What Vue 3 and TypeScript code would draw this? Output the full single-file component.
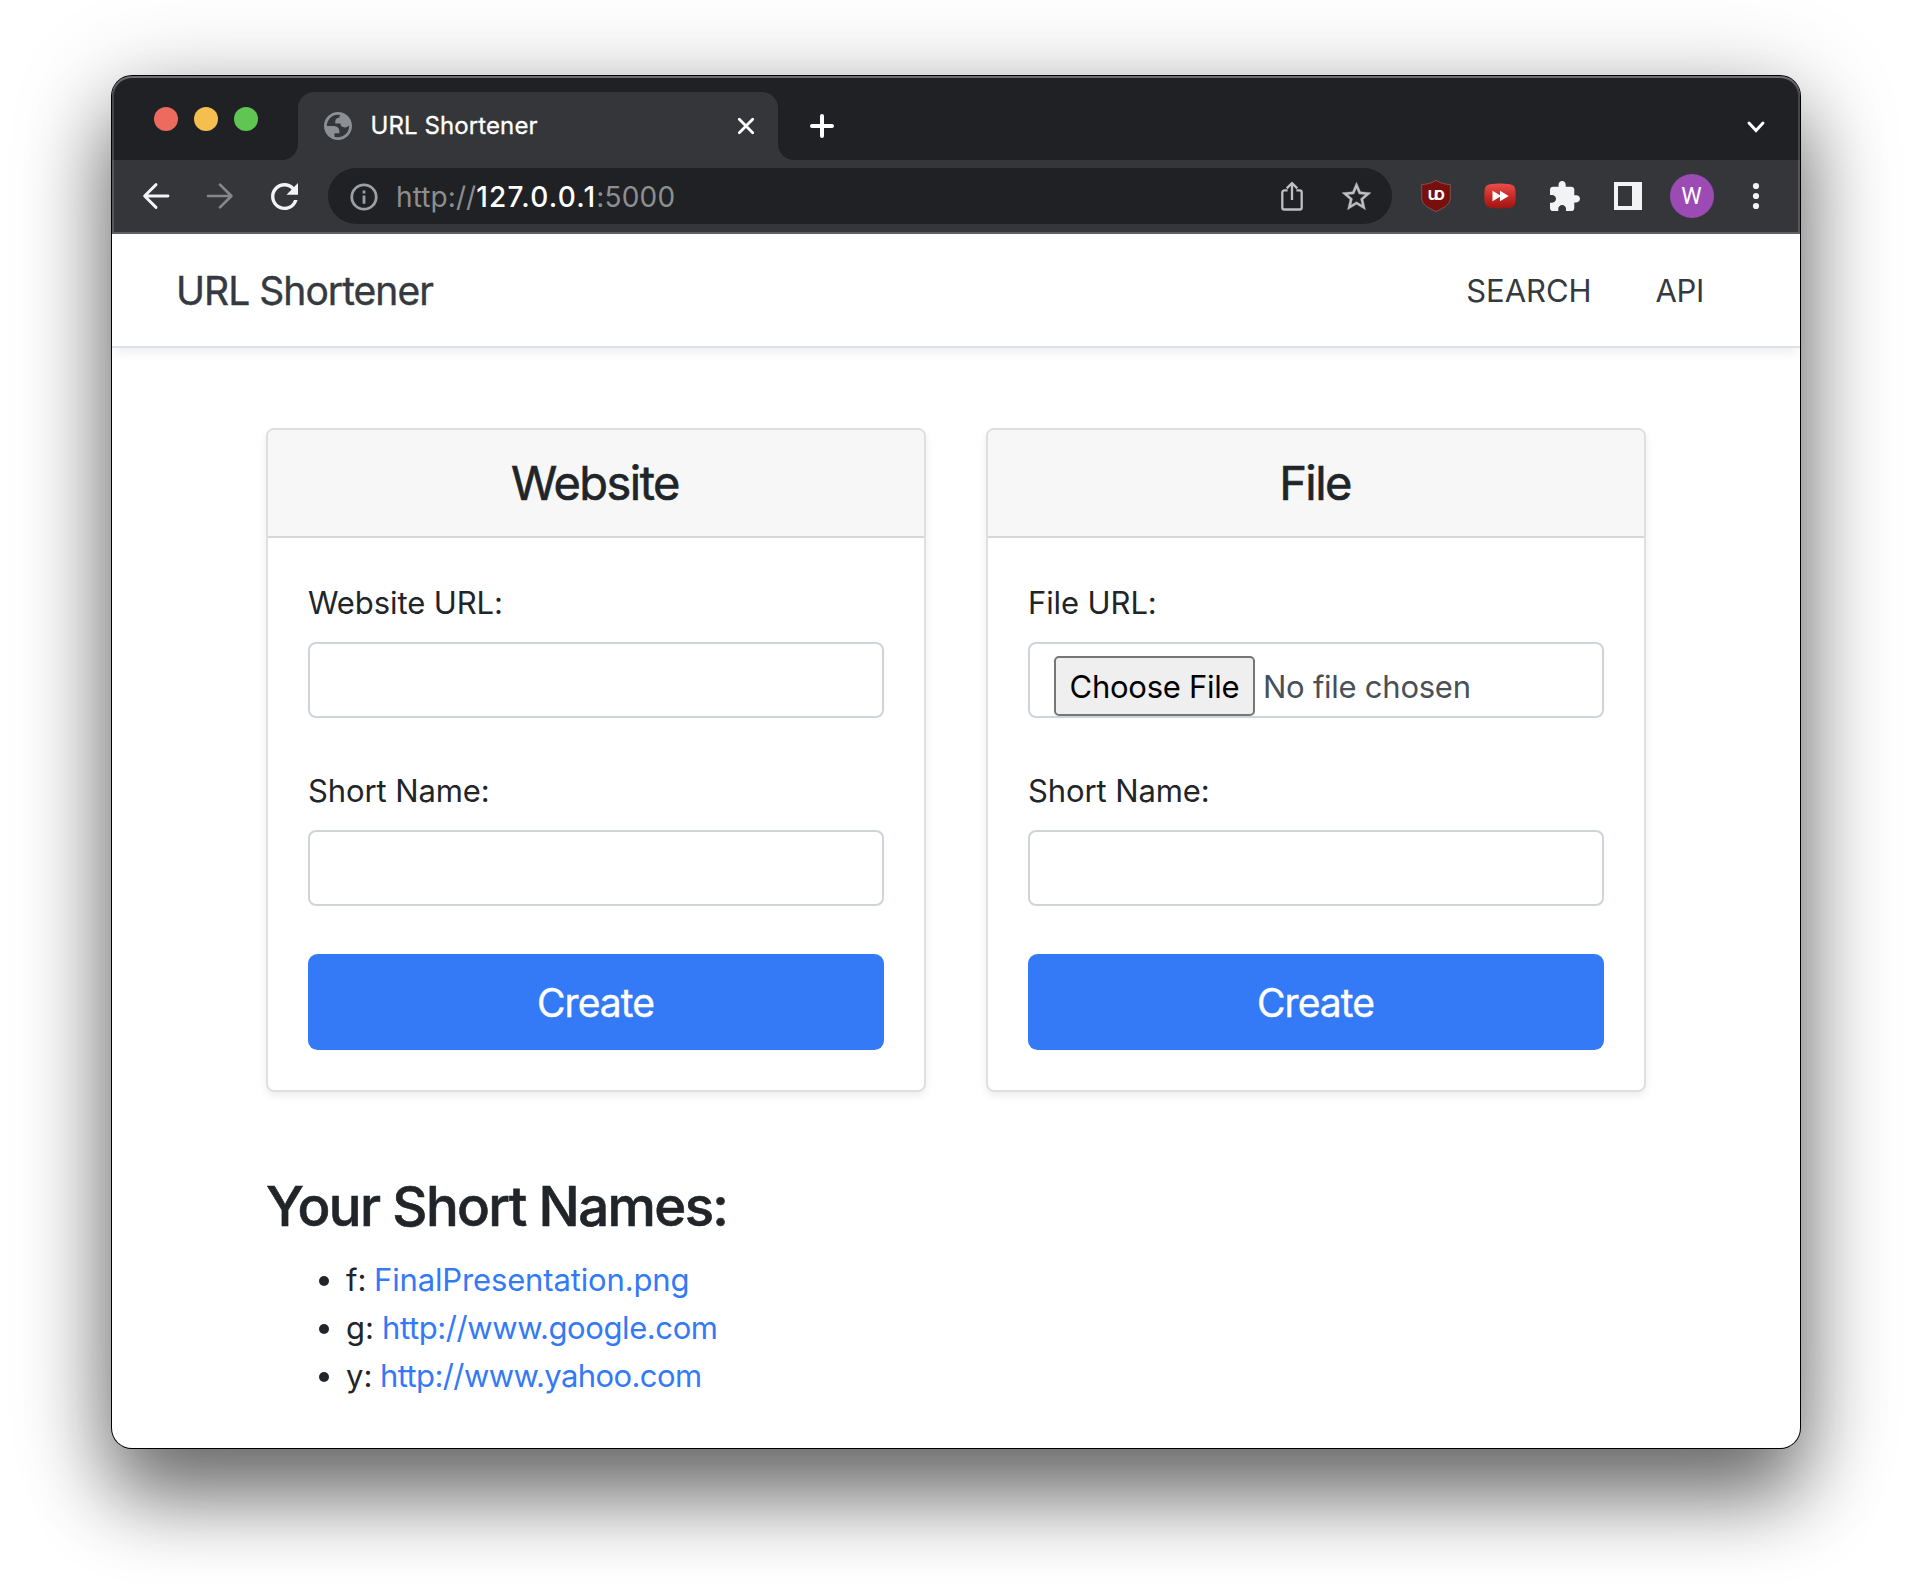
<script setup lang="ts">
interface Card {
  title: string
  label: string
  file: boolean
}
interface ShortName {
  key: string
  target: string
  kind: string
}

const cards: Card[] = [
  { title: 'Website', label: 'Website URL:', file: false },
  { title: 'File', label: 'File URL:', file: true },
]

const names: ShortName[] = [
  { key: 'f:', target: 'FinalPresentation.png', kind: 'png' },
  { key: 'g:', target: 'http://www.google.com', kind: 'google' },
  { key: 'y:', target: 'http://www.yahoo.com', kind: 'yahoo' },
]
</script>

<template>
  <div class="desktop">
    <div class="window">
      <div class="chrome">
        <div class="tabstrip">
          <div class="lights">
            <i class="light red"></i>
            <i class="light yellow"></i>
            <i class="light green"></i>
          </div>
          <div class="tab">
            <svg class="globe" width="28" height="28" viewBox="2 2 20 20">
              <path fill="#8a9095" d="M12 2c5.523 0 10 4.477 10 10s-4.477 10-10 10S2 17.523 2 12 6.477 2 12 2zM4 12h4.4c3.407.022 4.922 1.73 4.543 5.127H9.488v2.47a8.004 8.004 0 0 0 10.498-8.083C19.327 12.504 18.332 13 17 13c-2.137 0-3.206-.916-3.206-2.75h-3.748c-.274-2.728.683-4.092 2.87-4.092 0-.975.327-1.597.811-1.97A8.004 8.004 0 0 0 4 12z" />
            </svg>
            <span class="tab-title">URL Shortener</span>
            <svg width="18" height="18" viewBox="0 0 18 18" fill="none" stroke="#fff" stroke-width="2.8" stroke-linecap="round">
              <path d="M2.3 2.3l13.4 13.4M15.7 2.3L2.3 15.7" />
            </svg>
          </div>
          <svg class="plus" width="24" height="24" viewBox="0 0 24 24" fill="none" stroke="#fff" stroke-width="4" stroke-linecap="round">
            <path d="M12 2v20M2 12h20" />
          </svg>
          <svg class="chevron" width="18" height="12" viewBox="0 0 18 12" fill="none" stroke="#fff" stroke-width="2.9" stroke-linecap="round">
            <path d="M2 2l7 7.6L16 2" />
          </svg>
        </div>

        <div class="toolbar">
          <svg class="back" width="28" height="28" viewBox="0 0 28 28" fill="none" stroke="#f1f3f4" stroke-width="2.9" stroke-linecap="round" stroke-linejoin="round">
            <path d="M26 14H3M14 2.6L2.6 14 14 25.4" />
          </svg>
          <svg class="forward" width="28" height="28" viewBox="0 0 28 28" fill="none" stroke="#86878a" stroke-width="2.7" stroke-linecap="round" stroke-linejoin="round">
            <path d="M2 14h23M14 2.6L25.4 14 14 25.4" />
          </svg>
          <svg class="reload" width="27" height="27" viewBox="4 4 16 16" fill="#f1f3f4">
            <path d="M17.65 6.35A7.958 7.958 0 0012 4c-4.42 0-7.99 3.58-7.99 8s3.57 8 7.99 8c3.73 0 6.84-2.55 7.73-6h-2.08A5.99 5.99 0 0112 18c-3.31 0-6-2.69-6-6s2.69-6 6-6c1.66 0 3.14.69 4.22 1.78L13.2 11H20V4z" />
          </svg>
          <div class="omnibox">
            <svg class="info" width="28" height="28" viewBox="0 0 28 28" fill="none" stroke="#9aa0a6" stroke-width="2.8">
              <circle cx="14" cy="14" r="12.2" />
              <path d="M14 12.6v8.2M14 7.6v2.8" />
            </svg>
            <div class="url"><span class="scheme">http://</span><span class="host">127.0.0.1</span><span class="port">:5000</span></div>
            <svg class="share" width="22" height="30" viewBox="0 0 22 30" fill="none" stroke="#bdbfc2" stroke-width="2.3">
              <path d="M6.6 9.4H3.4a2.1 2.1 0 0 0-2.1 2.1v14.9a2.1 2.1 0 0 0 2.1 2.1h15.2a2.1 2.1 0 0 0 2.1-2.1V11.5a2.1 2.1 0 0 0-2.1-2.1h-3.2M11 19V2.2M5.7 7.4L11 2.1l5.3 5.3" />
            </svg>
            <svg class="star" width="29" height="28" viewBox="2 2 20 19" fill="#bdbfc2" stroke="#bdbfc2" stroke-width=".25">
              <path d="M22 9.24l-7.19-.62L12 2 9.19 8.63 2 9.24l5.46 4.73L5.82 21 12 17.27 18.18 21l-1.63-7.03L22 9.24zM12 15.4l-3.76 2.27 1-4.28-3.32-2.88 4.38-.38L12 6.1l1.71 4.04 4.38.38-3.32 2.88 1 4.28L12 15.4z" />
            </svg>
          </div>
          <div class="extensions">
            <svg width="32" height="34" viewBox="0 0 32 34">
              <path d="M16 1.3C12 4.2 7 5.3 1.7 5.5V19c0 6 5.5 9.5 14.3 13.5C24.8 28.5 30.3 25 30.3 19V5.5C25 5.3 20 4.2 16 1.3z" fill="#780f0c" stroke="#7e5a5b" stroke-width=".9" />
              <text x="7.5" y="20.500" font-family="Inter, sans-serif" font-weight="600" font-size="18" fill="#fff" textLength="17.500" lengthAdjust="spacing">uo</text>
            </svg>
            <svg width="32" height="26" viewBox="0 0 32 26">
              <defs>
                <linearGradient id="redbox" x1="0" y1="0" x2="0" y2="1">
                  <stop offset="0" stop-color="#ea4f4b" />
                  <stop offset=".5" stop-color="#c92b28" />
                  <stop offset="1" stop-color="#9c1512" />
                </linearGradient>
              </defs>
              <path d="M6 1.2Q16-.4 26 1.2 31 2 31.4 7q.5 6 0 12-.4 5-5.4 5.8-10 1.4-20 0Q1 24 .6 19q-.5-6 0-12Q1 2 6 1.2z" fill="url(#redbox)" />
              <path d="M8.5 7.7L16 12.3V7.7l8.7 5.3-8.7 5.3v-4.6l-7.5 4.6z" fill="#fff" />
            </svg>
            <svg width="30" height="30" viewBox="2 1 21 21" fill="#f1f3f4">
              <path d="M20.5 11H19V7c0-1.1-.9-2-2-2h-4V3.5C13 2.12 11.88 1 10.5 1S8 2.12 8 3.5V5H4c-1.1 0-1.99.9-1.99 2v3.8H3.5c1.49 0 2.7 1.21 2.7 2.7s-1.21 2.7-2.7 2.7H2V20c0 1.1.9 2 2 2h3.8v-1.5c0-1.49 1.21-2.7 2.7-2.7 1.49 0 2.7 1.21 2.7 2.7V22H17c1.1 0 2-.9 2-2v-4h1.5c1.38 0 2.5-1.12 2.5-2.5S21.88 11 20.5 11z" />
            </svg>
            <svg width="28" height="28" viewBox="0 0 28 28" fill="#f1f3f4" fill-rule="evenodd">
              <path d="M0 0h28v28H0zM4 4v20h14V4z" />
            </svg>
            <div class="avatar">W</div>
            <svg width="8" height="28" viewBox="0 0 8 28" fill="#f1f3f4">
              <circle cx="4" cy="4" r="3.1" /><circle cx="4" cy="14" r="3.1" /><circle cx="4" cy="24" r="3.1" />
            </svg>
          </div>
        </div>
      </div>

      <header class="navbar">
        <a class="brand">URL Shortener</a>
        <nav>
          <a class="search">SEARCH</a>
          <a class="api">API</a>
        </nav>
      </header>

      <main>
        <div class="cards">
          <section v-for="card in cards" :key="card.title" class="card">
            <h4>{{ card.title }}</h4>
            <div class="body">
              <label>{{ card.label }}</label>
              <div v-if="card.file" class="field">
                <span class="choose">Choose File</span>
                <span class="nofile">No file chosen</span>
              </div>
              <div v-else class="field"></div>
              <label>Short Name:</label>
              <div class="field"></div>
              <button type="button">Create</button>
            </div>
          </section>
        </div>

        <h3>Your Short Names:</h3>
        <ul>
          <li v-for="n in names" :key="n.key">
            <i class="bullet"></i>
            <span class="key" :class="n.kind">{{ n.key }}</span>
            <a :class="n.kind">{{ n.target }}</a>
          </li>
        </ul>
      </main>
    </div>
  </div>
</template>

<style>
body {
  background: #fff;
  overflow: hidden;
}
</style>

<style scoped>
* {
  box-sizing: border-box;
}
.desktop {
  width: 1912px;
  height: 1596px;
  padding: 76px 112px 0;
  overflow: hidden;
  font-family: Inter, "Liberation Sans", sans-serif;
  font-size: 31px;
  color: #212529;
}
svg {
  display: block;
  flex: none;
}
.window {
  width: 1688px;
  height: 1372px;
  border-radius: 20px;
  background: #fff;
  box-shadow:
    0 0 0 1px #000,
    0 50px 80px rgba(0, 0, 0, 0.48),
    0 16px 100px rgba(0, 0, 0, 0.28);
}
.chrome {
  position: relative;
  height: 158px;
  border-radius: 20px 20px 0 0;
  background: #35363a;
  border-bottom: 2px solid #5f6064;
  overflow: hidden;
}
.chrome::after {
  content: "";
  position: absolute;
  inset: 0 0 -40px;
  border-radius: 20px 20px 0 0;
  box-shadow: inset 0 0 0 2px rgba(255, 255, 255, 0.17), inset 0 2px 0 rgba(255, 255, 255, 0.22);
}
.tabstrip {
  display: flex;
  align-items: flex-end;
  height: 84px;
  background: #202124;
}
.lights {
  display: flex;
  gap: 16px;
  width: 186px;
  padding: 0 0 29px 42px;
}
.light {
  width: 24px;
  height: 24px;
  border-radius: 50%;
}
.red { background: #ed6a5e; }
.yellow { background: #f5bf4f; }
.green { background: #61c554; }
.tab {
  position: relative;
  display: flex;
  align-items: center;
  width: 480px;
  height: 68px;
  padding: 0 23px 0 26px;
  border-radius: 16px 16px 0 0;
  background: #35363a;
}
.tab::before,
.tab::after {
  content: "";
  position: absolute;
  bottom: 0;
  width: 16px;
  height: 16px;
}
.tab::before {
  left: -16px;
  background: radial-gradient(circle at 0 0, #202124 15.5px, #35363a 16.5px);
}
.tab::after {
  right: -16px;
  background: radial-gradient(circle at 100% 0, #202124 15.5px, #35363a 16.5px);
}
.tab-title {
  flex: 1;
  margin: -1px 0 0 18.5px;
  font-size: 24px;
  font-weight: 400;
  line-height: 30px;
  letter-spacing: 0.1px;
  color: #fff;
  -webkit-text-stroke: 0.3px #fff;
}
.plus {
  margin: 0 0 22px 32px;
}
.chevron {
  margin: 0 35px 27px auto;
}
.toolbar {
  display: flex;
  align-items: center;
  height: 72px;
  padding-left: 30px;
}
.forward { margin-left: 36px; }
.reload { margin-left: 36.5px; }
.omnibox {
  display: flex;
  align-items: center;
  width: 1064px;
  height: 56px;
  margin-left: 30px;
  padding: 0 21px 0 22px;
  border-radius: 28px;
  background: #202124;
}
.info { margin-top: 1px; }
.url {
  flex: 1;
  margin-left: 18.5px;
  padding-top: 1px;
  font-size: 28px;
  line-height: 36px;
  white-space: nowrap;
  color: #8d8e90;
}
.scheme { letter-spacing: 0.1px; }
.host { color: #fff; letter-spacing: 1.2px; font-weight: 500; }
.port { letter-spacing: 0.2px; }
.share { margin-right: 39px; }
.extensions {
  display: flex;
  align-items: center;
  gap: 32px;
  margin-left: 28px;
}
.extensions svg:nth-child(3) { margin-left: 2px; }
.extensions svg:nth-child(4) { margin-left: 2px; }
.avatar {
  width: 44px;
  height: 44px;
  margin: 0 6px 0 -4px;
  border-radius: 50%;
  background: #9c4bb5;
  color: #fff;
  font: 400 23px/46px Roboto, sans-serif;
  text-align: center;
}
.navbar {
  display: flex;
  align-items: center;
  justify-content: space-between;
  height: 114px;
  padding: 2px 96px 0 64px;
  border-bottom: 2px solid #dee2e6;
  box-shadow: 0 8px 10px -2px rgba(0, 0, 0, 0.06);
  color: #343a40;
}
.brand {
  font-size: 39px;
  line-height: 60px;
  letter-spacing: -0.97px;
  -webkit-text-stroke: 0.4px #343a40;
}
nav {
  display: flex;
  line-height: 48px;
}
.search {
  letter-spacing: -0.04px;
}
.api {
  margin-left: 64px;
  letter-spacing: -0.34px;
}
main {
  padding: 80px 154px 0;
}
.cards {
  display: flex;
  gap: 60px;
}
.card {
  width: 660px;
  height: 664px;
  border: 2px solid #dfdfdf;
  border-radius: 8px;
  box-shadow: 0 4px 8px rgba(0, 0, 0, 0.075);
  overflow: hidden;
}
h4 {
  height: 108px;
  margin: 0;
  padding-right: 2px;
  border-bottom: 2px solid #d8d8d8;
  background: #f7f7f7;
  font-size: 47px;
  font-weight: 400;
  line-height: 106px;
  letter-spacing: -1.55px;
  text-align: center;
  -webkit-text-stroke: 0.6px #212529;
}
.body {
  padding: 40px;
}
label {
  display: block;
  height: 48px;
  margin-bottom: 16px;
  padding-top: 1px;
  line-height: 48px;
  letter-spacing: -0.1px;
}
.field {
  display: flex;
  height: 76px;
  margin-bottom: 48px;
  padding: 12px 0 0 24px;
  border: 2px solid #ced4da;
  border-radius: 8px;
}
.choose {
  width: 201px;
  height: 60px;
  border: 2px solid #767676;
  border-radius: 5px;
  background: #efefef;
  color: #000;
  line-height: 57px;
  letter-spacing: -0.26px;
  text-align: center;
}
.nofile {
  margin-left: 8px;
  line-height: 61px;
  letter-spacing: -0.26px;
  color: #495057;
}
button {
  display: block;
  width: 100%;
  height: 96px;
  padding: 2px 1px 0 0;
  border: 0;
  border-radius: 9.6px;
  background: #347af6;
  color: #fff;
  font: 400 39px/94px Inter, sans-serif;
  letter-spacing: -0.95px;
  -webkit-text-stroke: 0.4px #fff;
}
h3 {
  margin: 80.8px 0 16px;
  font-size: 54.5px;
  font-weight: 500;
  line-height: 67.2px;
  letter-spacing: -1.63px;
  -webkit-text-stroke: 0.6px #212529;
}
ul {
  margin: 0;
  padding: 0;
  list-style: none;
}
li {
  display: flex;
  align-items: center;
  height: 48px;
  line-height: 48px;
}
.bullet {
  width: 10px;
  height: 10px;
  margin: 2px 17px 0 53px;
  border-radius: 50%;
  background: #212529;
}
.key { width: 28px; }
.key.google { width: 36px; }
.key.yahoo { width: 34px; }
li a { color: #347af6; }
a.png { letter-spacing: -0.14px; }
a.google { letter-spacing: -0.4px; }
a.yahoo { letter-spacing: -0.6px; }
</style>
